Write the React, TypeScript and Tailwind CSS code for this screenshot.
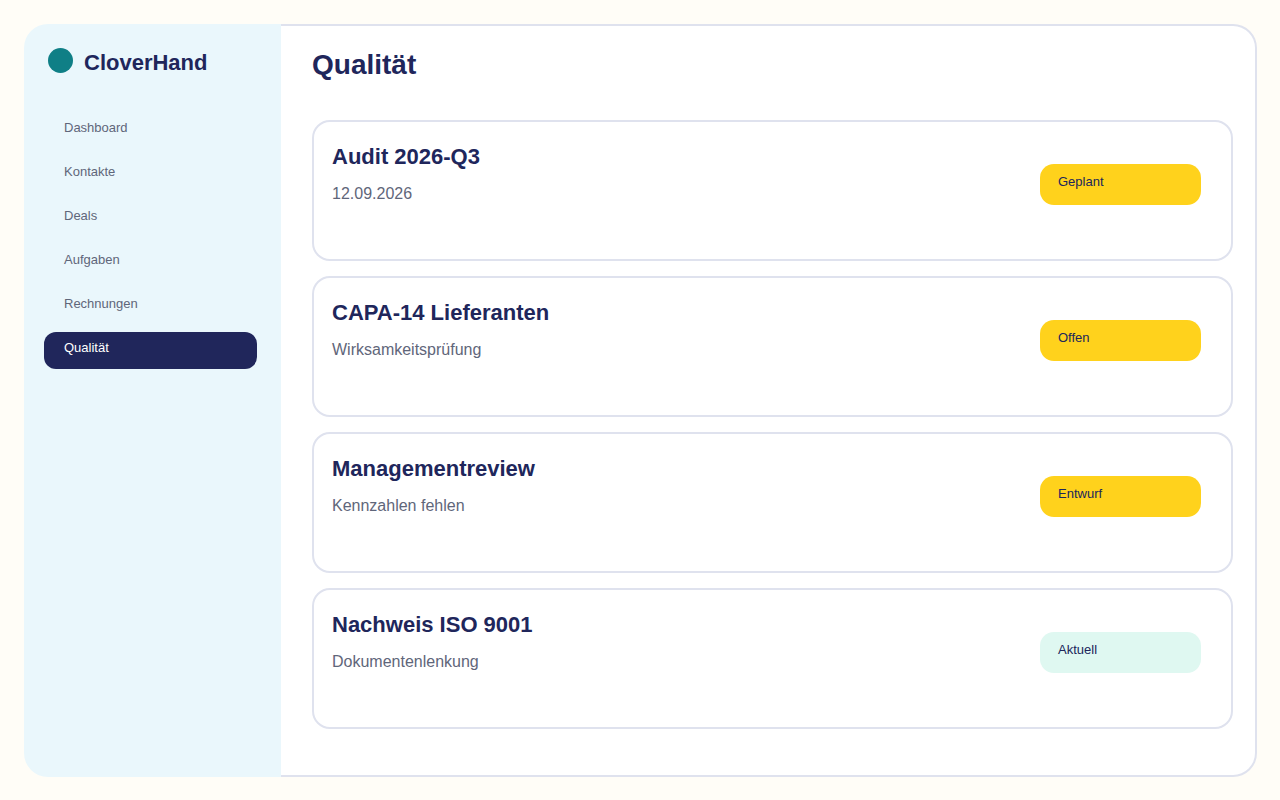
type Audit = { title: string; detail: string; status: string; done?: boolean };

const navItems = ["Dashboard", "Kontakte", "Deals", "Aufgaben", "Rechnungen", "Qualität"];

const audits: Audit[] = [
  { title: "Audit 2026-Q3", detail: "12.09.2026", status: "Geplant" },
  { title: "CAPA-14 Lieferanten", detail: "Wirksamkeitsprüfung", status: "Offen" },
  { title: "Managementreview", detail: "Kennzahlen fehlen", status: "Entwurf" },
  { title: "Nachweis ISO 9001", detail: "Dokumentenlenkung", status: "Aktuell", done: true },
];

export default function App() {
  return (
    <div className="flex min-h-screen bg-[#fffdf7] pt-6 pr-[23px] pb-[23px] pl-6 font-['Liberation_Sans',Arial,sans-serif] text-[#20265b]">
      <Sidebar active="Qualität" />
      <main className="min-w-0 flex-1 rounded-r-3xl border-2 border-l-0 border-[#dfe2ee] bg-white pt-[22px] pr-[22px] pb-6 pl-[31px]">
        <h1 className="text-[28px] leading-[34px] font-bold">Qualität</h1>
        <div className="mt-[38px] flex flex-col gap-[15px]">
          {audits.map((audit) => (
            <AuditCard key={audit.title} {...audit} />
          ))}
        </div>
      </main>
    </div>
  );
}

function Sidebar({ active }: { active: string }) {
  return (
    <aside className="w-[257px] shrink-0 rounded-l-3xl bg-[#eaf7fc] pt-6 pr-6 pl-5">
      <div className="flex gap-[11px] pl-1">
        <span className="size-[25px] shrink-0 rounded-full bg-[#0f7f86]" />
        <span className="text-[22px] leading-[30px] font-bold">CloverHand</span>
      </div>
      <nav className="mt-[34px] flex flex-col gap-[7px]">
        {navItems.map((item) => (
          <a
            key={item}
            href="#"
            aria-current={item === active ? "page" : undefined}
            className={`h-[37px] rounded-xl px-5 pt-2 text-[13px] leading-4 ${
              item === active ? "bg-[#20265b] text-white" : "text-[#5f667a]"
            }`}
          >
            {item}
          </a>
        ))}
      </nav>
    </aside>
  );
}

function AuditCard({ title, detail, status, done }: Audit) {
  return (
    <section className="flex min-h-[141px] items-start justify-between rounded-[18px] border-2 border-[#dfe2ee] pt-[22px] pr-[30px] pb-5 pl-[18px]">
      <div>
        <h2 className="text-[22px] leading-[26px] font-bold">{title}</h2>
        <p className="mt-3.5 text-base leading-5 text-[#5f667a]">{detail}</p>
      </div>
      <span
        className={`mt-5 h-[41px] w-[161px] shrink-0 rounded-[14px] px-[18px] pt-2.5 text-[13px] leading-4 ${
          done ? "bg-[#dff8f1]" : "bg-[#ffd21c]"
        }`}
      >
        {status}
      </span>
    </section>
  );
}
